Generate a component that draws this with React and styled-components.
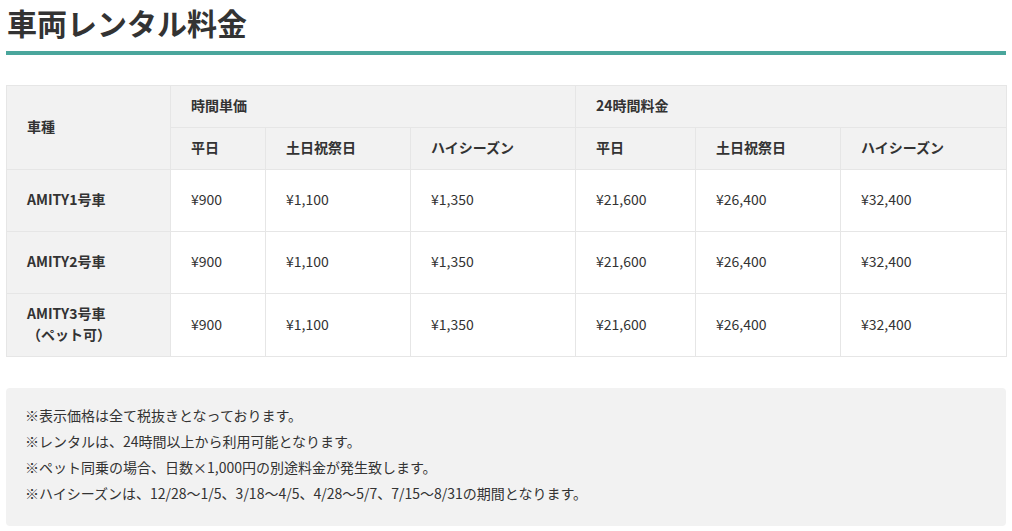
import React from 'react';
import styled, { createGlobalStyle } from 'styled-components';

const GlobalStyle = createGlobalStyle`
  body {
    margin: 0;
    background: #fff;
    color: #333;
    font-family: "Noto Sans CJK JP", "Noto Sans", sans-serif;
  }
`;

const Wrapper = styled.div`
  width: 1000px;
  margin: 0 auto;
`;

const Title = styled.h2`
  margin: 0;
  padding: 1px 0 8px 1px;
  font-size: 30px;
  line-height: 42px;
  font-weight: 700;
  color: #333;
  border-bottom: 4px solid #4aa69c;
`;

const PriceTable = styled.table`
  width: 100%;
  margin-top: 30px;
  border-collapse: collapse;
  table-layout: fixed;
  font-size: 14px;
`;

const HeadCell = styled.th`
  background: #f2f2f2;
  border: 1px solid #e6e6e6;
  padding: 9px 20px 11px;
  line-height: 21px;
  font-weight: 700;
  text-align: left;
  color: #333;
`;

const NameCell = styled.th`
  background: #f2f2f2;
  border: 1px solid #e6e6e6;
  padding: 9px 20px 11px;
  height: 41px;
  line-height: 21px;
  font-weight: 700;
  text-align: left;
  color: #333;
`;

const Cell = styled.td`
  border: 1px solid #e6e6e6;
  padding: 9px 20px 11px;
  height: 41px;
  line-height: 21px;
  color: #333;
`;

const Notes = styled.div`
  margin-top: 31px;
  background: #f2f2f2;
  border-radius: 4px;
  padding: 14px 19px 20px;
  font-size: 14px;
  line-height: 26px;
  color: #333;
`;

const Note = styled.p`
  margin: 0;
`;

const widths = [164, 95, 145, 165, 120, 145, 166];

const cars = [
  { name: 'AMITY1号車' },
  { name: 'AMITY2号車' },
  { name: 'AMITY3号車', sub: '（ペット可）' },
];

const prices = ['¥900', '¥1,100', '¥1,350', '¥21,600', '¥26,400', '¥32,400'];

const notes = [
  '※表示価格は全て税抜きとなっております。',
  '※レンタルは、24時間以上から利用可能となります。',
  '※ペット同乗の場合、日数×1,000円の別途料金が発生致します。',
  '※ハイシーズンは、12/28〜1/5、3/18〜4/5、4/28〜5/7、7/15〜8/31の期間となります。',
];

const dayTypes = ['平日', '土日祝祭日', 'ハイシーズン'];

const App = () => (
  <>
    <GlobalStyle />
    <Wrapper>
      <Title>車両レンタル料金</Title>
      <PriceTable>
        <colgroup>
          {widths.map((w, i) => (
            <col key={i} style={{ width: `${w}px` }} />
          ))}
        </colgroup>
        <thead>
          <tr>
            <HeadCell rowSpan={2}>車種</HeadCell>
            <HeadCell colSpan={3}>時間単価</HeadCell>
            <HeadCell colSpan={3}>24時間料金</HeadCell>
          </tr>
          <tr>
            {[...dayTypes, ...dayTypes].map((d, i) => (
              <HeadCell key={i}>{d}</HeadCell>
            ))}
          </tr>
        </thead>
        <tbody>
          {cars.map((car) => (
            <tr key={car.name}>
              <NameCell>
                {car.name}
                {car.sub && <br />}
                {car.sub}
              </NameCell>
              {prices.map((p, i) => (
                <Cell key={i}>{p}</Cell>
              ))}
            </tr>
          ))}
        </tbody>
      </PriceTable>
      <Notes>
        {notes.map((n) => (
          <Note key={n}>{n}</Note>
        ))}
      </Notes>
    </Wrapper>
  </>
);

export default App;
